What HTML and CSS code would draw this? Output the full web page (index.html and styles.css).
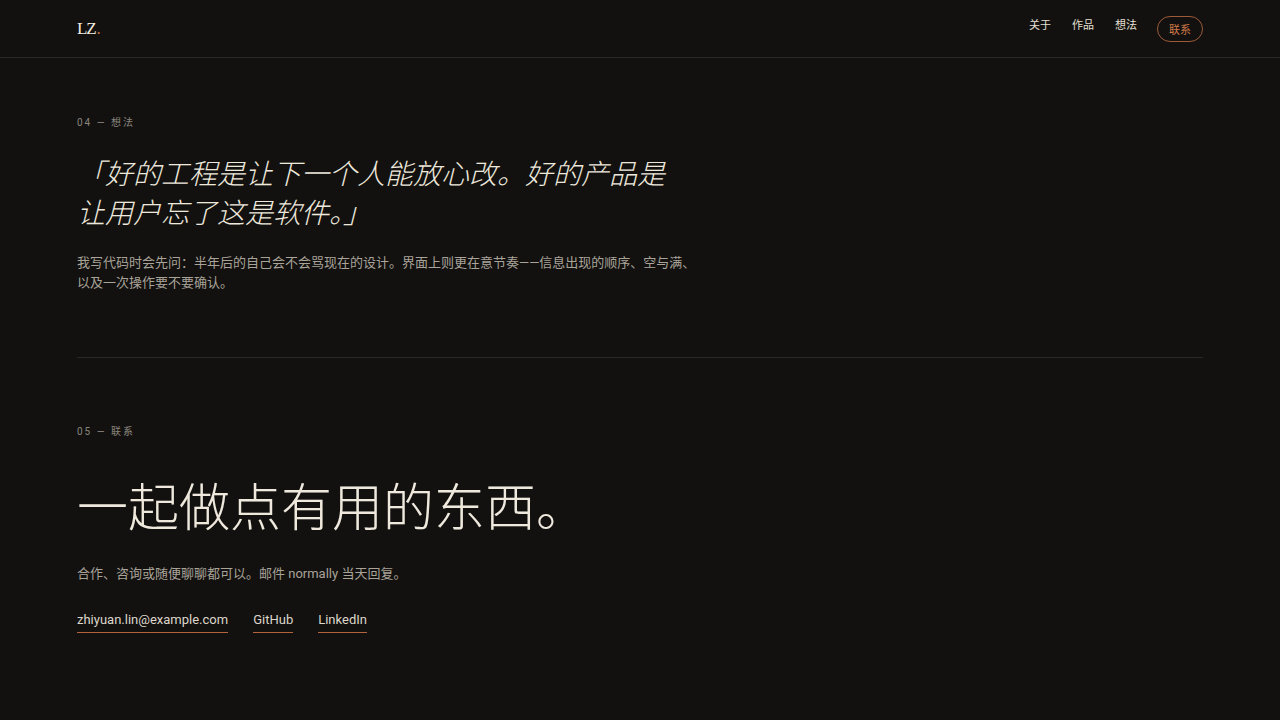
FILE: index.html
```html
<!DOCTYPE html>
<html lang="zh-CN">
<head>
<meta charset="utf-8">
<title>LZ.</title>
<link rel="stylesheet" href="styles.css">
</head>
<body>
<header class="site-header">
  <div class="header-inner">
    <div class="logo">LZ<span class="dot">.</span></div>
    <nav class="nav">
      <a class="nav-link" href="#">关于</a>
      <a class="nav-link" href="#">作品</a>
      <a class="nav-link" href="#">想法</a>
      <a class="nav-btn" href="#">联系</a>
    </nav>
  </div>
</header>
<main class="main">
  <section class="section section-thoughts">
    <div class="label">04 — 想法</div>
    <blockquote class="quote">「好的工程是让下一个人能放心改。好的产品是让用户忘了这是软件。」</blockquote>
    <p class="text">我写代码时会先问：半年后的自己会不会骂现在的设计。界面上则更在意节奏——信息出现的顺序、空与满、以及一次操作要不要确认。</p>
  </section>
  <section class="section section-contact">
    <div class="label">05 — 联系</div>
    <h2 class="headline">一起做点有用的东西。</h2>
    <p class="text">合作、咨询或随便聊聊都可以。邮件 normally 当天回复。</p>
    <div class="links">
      <a class="link" href="#">zhiyuan.lin@example.com</a>
      <a class="link" href="#">GitHub</a>
      <a class="link" href="#">LinkedIn</a>
    </div>
  </section>
</main>
</body>
</html>
```

FILE: styles.css
```css
* { box-sizing: border-box; }
html, body { margin: 0; padding: 0; }
body {
  background: #121110;
  color: #ece6da;
  font-family: Roboto, "Noto Sans CJK SC", sans-serif;
  min-height: 720px;
}
a { text-decoration: none; color: inherit; }

.site-header {
  border-bottom: 1px solid #2c2a27;
  height: 58px;
}
.header-inner {
  margin: 0 77px;
  height: 57px;
  display: flex;
  align-items: center;
  justify-content: space-between;
}
.logo {
  font-family: "Liberation Serif", serif;
  font-size: 17px;
  color: #f2ece0;
  letter-spacing: -1.2px;
  padding-top: 1px;
}
.logo .dot { color: #c0703f; margin-left: 1px; }

.nav {
  display: flex;
  align-items: center;
  gap: 21px;
}
.nav-link {
  font-family: "Noto Sans CJK SC", sans-serif;
  font-size: 11px;
  line-height: 14px;
  color: #e6e0d4;
  padding-bottom: 9px;
}
.nav-btn {
  font-family: "Noto Sans CJK SC", sans-serif;
  font-size: 11px;
  line-height: 14px;
  color: #d07a48;
  border: 1px solid #9c5a36;
  border-radius: 999px;
  padding: 5px 11px;
  margin-left: -1px;
}

.main { margin: 0 77px; }

.section-thoughts {
  padding: 59px 0 64px;
  border-bottom: 1px solid #2a2825;
}
.section-contact {
  padding: 68px 0 60px;
}

.label {
  font-family: Roboto, "Noto Sans CJK SC", sans-serif;
  font-size: 10px;
  line-height: 12px;
  letter-spacing: 2px;
  color: #8a857d;
}

.quote {
  margin: 24px 0 0;
  max-width: 600px;
  font-family: "Noto Sans CJK SC", sans-serif;
  font-style: italic;
  font-weight: 300;
  font-size: 28px;
  line-height: 39px;
  color: #efe9dd;
}

.text {
  margin: 22px 0 0;
  max-width: 620px;
  font-family: Roboto, "Noto Sans CJK SC", sans-serif;
  font-size: 13px;
  line-height: 20px;
  color: #a9a398;
}
.section-contact .text { margin-top: 26px; }

.headline {
  margin: 32px 0 0;
  font-family: "Noto Sans CJK SC", sans-serif;
  font-weight: 300;
  font-size: 51px;
  line-height: 68px;
  color: #efe9dd;
}

.links {
  margin-top: 26px;
  display: flex;
  gap: 25px;
}
.link {
  font-family: Roboto, "Noto Sans CJK SC", sans-serif;
  font-size: 13px;
  line-height: 20px;
  color: #ddd6ca;
  padding-bottom: 2px;
  border-bottom: 1px solid #b4643a;
}
```
